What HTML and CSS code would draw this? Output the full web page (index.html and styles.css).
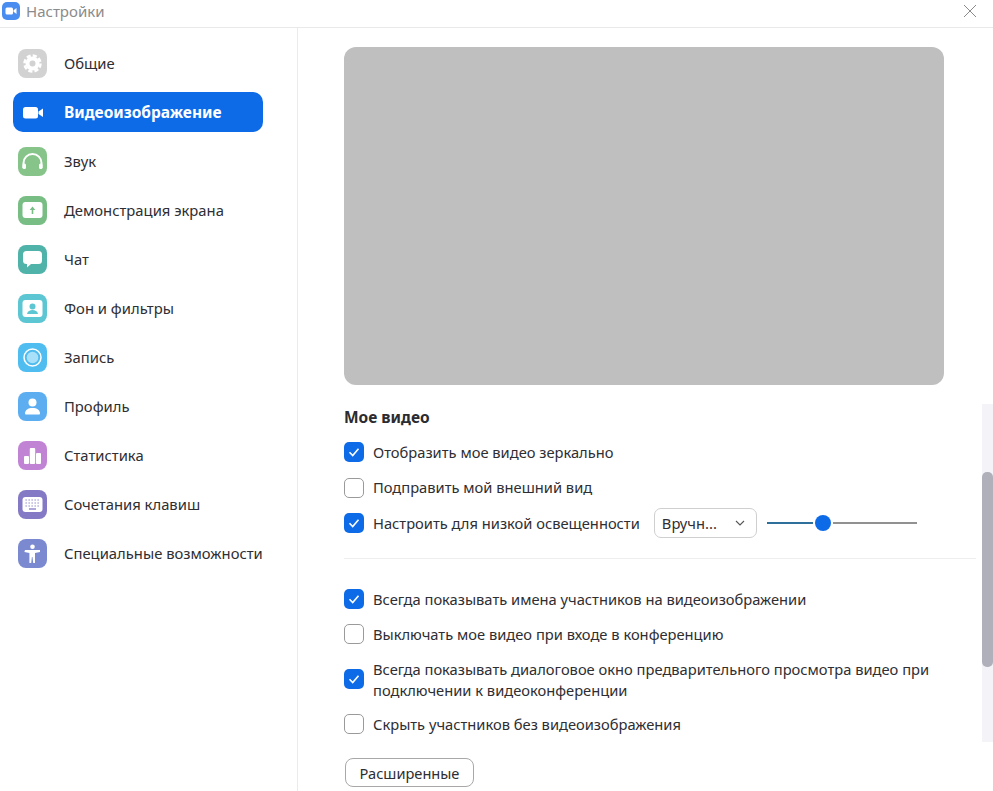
FILE: index.html
```html
<!DOCTYPE html>
<html lang="ru">
<head>
<meta charset="utf-8">
<title>Настройки</title>
<link rel="stylesheet" href="styles.css">
</head>
<body>
<div class="window">
  <header class="titlebar">
    <svg class="app-logo" viewBox="0 0 18 18"><rect width="18" height="18" rx="5" fill="#4a8df0"/><rect x="3.500" y="5.500" width="7.500" height="7" rx="1.500" fill="#fff"/><path d="M11.500 8.300 14.500 6v6l-3-2.300z" fill="#fff"/></svg>
    <span class="title">Настройки</span>
    <svg class="close" viewBox="0 0 14 14"><path d="M1 1l12 12M13 1 1 13" stroke="#8a8a8a" stroke-width="1" fill="none"/></svg>
  </header>
  <div class="body">
    <nav class="sidebar">
      <a class="nav-item">
        <svg class="ico" viewBox="0 0 29 29"><rect width="29" height="29" rx="8" fill="#d2d2d2"/><circle cx="14.500" cy="14.500" r="7" fill="#fff"/><circle cx="14.500" cy="14.500" r="8" fill="none" stroke="#fff" stroke-width="2.500" stroke-dasharray="4.200 2.083"/><circle cx="14.500" cy="14.500" r="3" fill="#d2d2d2"/></svg>
        <span>Общие</span>
      </a>
      <a class="nav-item active">
        <svg class="ico" viewBox="0 0 29 29"><rect x="5" y="9" width="15" height="11.500" rx="2.500" fill="#fff"/><path d="M20.500 13.500 25 10.500v8.500l-4.500-3z" fill="#fff"/></svg>
        <span>Видеоизображение</span>
      </a>
      <a class="nav-item">
        <svg class="ico" viewBox="0 0 29 29"><rect width="29" height="29" rx="8" fill="#86c48a"/><path d="M5.500 21v-5a9 9 0 0 1 18 0v5" stroke="#fff" stroke-width="2" fill="none"/><rect x="4.500" y="16.500" width="3.500" height="5.500" rx="1.500" fill="#fff"/><rect x="21" y="16.500" width="3.500" height="5.500" rx="1.500" fill="#fff"/></svg>
        <span>Звук</span>
      </a>
      <a class="nav-item">
        <svg class="ico" viewBox="0 0 29 29"><rect width="29" height="29" rx="8" fill="#78bd84"/><rect x="4.500" y="6" width="20" height="16" rx="3" fill="#fff"/><path d="M14.500 10.500 17.300 14h-2v4h-1.600v-4h-2z" fill="#78bd84"/></svg>
        <span>Демонстрация экрана</span>
      </a>
      <a class="nav-item">
        <svg class="ico" viewBox="0 0 29 29"><rect width="29" height="29" rx="8" fill="#4fb3a9"/><path d="M8.500 6h12a3.500 3.500 0 0 1 3.500 3.500v6a3.500 3.500 0 0 1-3.500 3.500H13l-4 3.500V19h-.5A3.500 3.500 0 0 1 5 15.500v-6A3.500 3.500 0 0 1 8.500 6z" fill="#fff"/></svg>
        <span>Чат</span>
      </a>
      <a class="nav-item">
        <svg class="ico" viewBox="0 0 29 29"><rect width="29" height="29" rx="8" fill="#5cc6d2"/><rect x="4.500" y="6" width="20" height="17" rx="3" fill="#fff"/><circle cx="14.500" cy="12.500" r="3" fill="#5cc6d2"/><path d="M9 20c.5-3 3-4 5.500-4s5 1 5.500 4z" fill="#5cc6d2"/></svg>
        <span>Фон и фильтры</span>
      </a>
      <a class="nav-item">
        <svg class="ico" viewBox="0 0 29 29"><rect width="29" height="29" rx="8" fill="#4fbdf0"/><circle cx="14.500" cy="14.500" r="8.500" fill="none" stroke="#fff" stroke-width="1.500"/><circle cx="14.500" cy="14.500" r="5.800" fill="#a9e0f9"/></svg>
        <span>Запись</span>
      </a>
      <a class="nav-item">
        <svg class="ico" viewBox="0 0 29 29"><rect width="29" height="29" rx="8" fill="#5daef0"/><circle cx="14.500" cy="10.500" r="4" fill="#fff"/><path d="M7 21.500c0-3.500 3-5.500 7.500-5.500s7.500 2 7.500 5.500c0 .5-.5 1-1 1H8c-.5 0-1-.5-1-1z" fill="#fff"/></svg>
        <span>Профиль</span>
      </a>
      <a class="nav-item">
        <svg class="ico" viewBox="0 0 29 29"><rect width="29" height="29" rx="8" fill="#c184d4"/><rect x="6" y="15" width="5" height="8" rx="1" fill="#fff"/><rect x="11.800" y="7" width="5.400" height="16" rx="1" fill="#fff"/><rect x="18" y="12" width="5" height="11" rx="1" fill="#fff"/></svg>
        <span>Статистика</span>
      </a>
      <a class="nav-item">
        <svg class="ico" viewBox="0 0 29 29"><rect width="29" height="29" rx="8" fill="#8479c4"/><rect x="4.500" y="7" width="20" height="15" rx="3" fill="#fff"/><path d="M7.500 10h14M7.500 13h14M7.500 16h14" stroke="#8479c4" stroke-width="1.200" stroke-dasharray="1.300 1.700" fill="none"/><path d="M11 19h7" stroke="#8479c4" stroke-width="1.300"/></svg>
        <span>Сочетания клавиш</span>
      </a>
      <a class="nav-item">
        <svg class="ico" viewBox="0 0 29 29"><rect width="29" height="29" rx="8" fill="#7b8ad0"/><circle cx="14.500" cy="7.800" r="2.300" fill="#fff"/><path d="M7 11h15v2l-5 1v10h-1.800l-.7-6h-.6l-.7 6h-1.800V14l-5-1z" fill="#fff"/></svg>
        <span>Специальные возможности</span>
      </a>
    </nav>
    <main class="content">
      <div class="preview"></div>
      <h2 class="heading">Мое видео</h2>
      <div class="group">
        <div class="row"><span class="box on"><svg viewBox="0 0 20 20"><path d="M5.500 10.300 8.700 13.500 14.500 6.800" stroke="#fff" stroke-width="1.600" fill="none"/></svg></span><span>Отобразить мое видео зеркально</span></div>
        <div class="row"><span class="box"></span><span>Подправить мой внешний вид</span></div>
        <div class="row">
          <span class="box on"><svg viewBox="0 0 20 20"><path d="M5.500 10.300 8.700 13.500 14.500 6.800" stroke="#fff" stroke-width="1.600" fill="none"/></svg></span>
          <span>Настроить для низкой освещенности</span>
          <div class="select"><span>Вручн...</span><svg viewBox="0 0 10 6"><path d="M1 1l4 4 4-4" stroke="#555" stroke-width="1.100" fill="none"/></svg></div>
          <div class="slider"><i class="track-a"></i><i class="knob"></i><i class="track-b"></i></div>
        </div>
      </div>
      <hr class="divider">
      <div class="group second">
        <div class="row"><span class="box on"><svg viewBox="0 0 20 20"><path d="M5.500 10.300 8.700 13.500 14.500 6.800" stroke="#fff" stroke-width="1.600" fill="none"/></svg></span><span>Всегда показывать имена участников на видеоизображении</span></div>
        <div class="row"><span class="box"></span><span>Выключать мое видео при входе в конференцию</span></div>
        <div class="row tall"><span class="box on"><svg viewBox="0 0 20 20"><path d="M5.500 10.300 8.700 13.500 14.500 6.800" stroke="#fff" stroke-width="1.600" fill="none"/></svg></span><span class="wrap">Всегда показывать диалоговое окно предварительного просмотра видео при подключении к видеоконференции</span></div>
        <div class="row"><span class="box"></span><span>Скрыть участников без видеоизображения</span></div>
      </div>
      <button class="btn">Расширенные</button>
      <div class="scrollbar"><div class="thumb"></div></div>
    </main>
  </div>
</div>
</body>
</html>
```
FILE: styles.css
```css
* { box-sizing: border-box; }
html, body { margin: 0; height: 100%; }
body {
  background: #fff;
  color: #2e2e33;
  font-family: "Noto Sans", "Open Sans", sans-serif;
  font-size: 14.700px;
  overflow: hidden;
}
.window { width: 993px; height: 791px; display: flex; flex-direction: column; overflow: hidden; }
.titlebar {
  height: 28px;
  flex: none;
  display: flex;
  align-items: center;
  padding: 0 16px 5px 2px;
  border-bottom: 1px solid #e9e9e9;
}
.app-logo { width: 18px; height: 18px; }
.title { margin-left: 6px; color: #8b8b8b; font-size: 15px; line-height: 20px; }
.close { width: 14px; height: 14px; margin-left: auto; }
.body { flex: 1; display: flex; min-height: 0; }
.sidebar {
  width: 298px;
  flex: none;
  border-right: 1px solid #ebebeb;
  padding: 15px 0 0 13px;
  display: flex;
  flex-direction: column;
  gap: 9px;
}
.nav-item {
  width: 250px;
  height: 40px;
  flex: none;
  display: flex;
  align-items: center;
  gap: 17px;
  padding-left: 5px;
  border-radius: 10px;
  white-space: nowrap;
  font-size: 14.800px;
}
.nav-item.active { background: #0e6be8; color: #fff; font-weight: 700; font-size: 15.500px; }
.ico { width: 29px; height: 29px; flex: none; }
.content { flex: 1; position: relative; padding: 19px 0 0 46px; min-width: 0; }
.preview { width: 600px; height: 338px; background: #bfbfbf; border-radius: 12px; }
.heading { margin: 21px 0 0; font-size: 15.500px; font-weight: 700; line-height: 22px; color: #2b2b30; }
.group { margin-top: 14px; display: flex; flex-direction: column; gap: 15.500px; }
.group.second { margin-top: 30px; gap: 15px; }
.row { height: 20px; display: flex; align-items: center; white-space: nowrap; line-height: 21px; }
.row.tall { height: 40px; }
.wrap { white-space: normal; width: 590px; margin-top: 2px; }
.box {
  width: 20px;
  height: 20px;
  flex: none;
  margin-right: 9px;
  border: 1.500px solid #9a9a9a;
  border-radius: 5px;
  background: #fff;
}
.box.on { background: #0e6be8; border: 0; }
.box svg { display: block; width: 20px; height: 20px; }
.select {
  width: 103px;
  height: 30px;
  flex: none;
  margin-left: 14px;
  padding: 0 11px 0 7px;
  display: flex;
  align-items: center;
  justify-content: space-between;
  border: 1px solid #cfcfcf;
  border-radius: 7px;
}
.select svg { width: 10px; height: 6px; }
.slider { display: flex; align-items: center; width: 150px; margin-left: 10px; flex: none; }
.track-a { width: 46px; height: 2px; background: #2f6f9c; }
.knob { width: 16px; height: 16px; margin: 0 2px; border-radius: 50%; background: #0e6be8; flex: none; }
.track-b { flex: 1; height: 2px; background: #919191; }
.divider { margin: 25px 17px 0 0; height: 1px; border: 0; background: #eeeeee; }
.btn {
  display: block;
  margin: 24px 0 0 1px;
  width: 129px;
  height: 29px;
  padding: 0;
  background: #fff;
  border: 1px solid #a8a8a8;
  border-radius: 8px;
  color: #2e2e33;
  font: inherit;
  font-size: 14.600px;
}
.scrollbar {
  position: absolute;
  top: 376px;
  right: 0;
  width: 11px;
  height: 338px;
  background: #f3f3f8;
}
.thumb { margin-top: 68px; height: 195px; background: #b0b0ba; border-radius: 5px; }
```
